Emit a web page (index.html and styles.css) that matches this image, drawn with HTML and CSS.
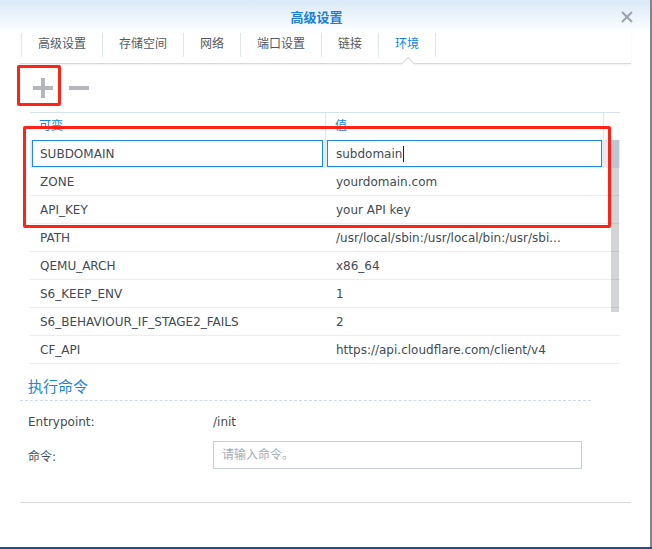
FILE: index.html
```html
<!DOCTYPE html>
<html lang="zh-CN">
<head>
  <meta charset="UTF-8" />
  <title>高级设置</title>
  <link rel="stylesheet" href="styles.css">
</head>
<body>

  <div class="window">
    <div class="titlebar">
      <h1 class="title">高级设置</h1>
      <svg class="close" width="12" height="12" viewBox="0 0 12 12">
        <path d="M1 1 L11 11 M11 1 L1 11" stroke="#9da2a7" stroke-width="2" fill="none" />
      </svg>
    </div>

    <div class="tabs">
      <div class="tab">高级设置</div>
      <div class="tab">存储空间</div>
      <div class="tab">网络</div>
      <div class="tab">端口设置</div>
      <div class="tab">链接</div>
      <div class="tab active">环境</div>
    </div>

    <div class="toolbar">
      <button class="tool-btn" title="新增">
        <svg width="20" height="20" viewBox="0 0 20 20">
          <rect x="0" y="8" width="20" height="4" fill="#b3b6ba" />
          <rect x="8" y="0" width="4" height="20" fill="#b3b6ba" />
        </svg>
      </button>
      <button class="tool-btn" title="删除">
        <svg width="20" height="20" viewBox="0 0 20 20">
          <rect x="0" y="8" width="20" height="4" fill="#b3b6ba" />
        </svg>
      </button>
    </div>

    <div class="env-grid">
      <div class="grid-head">
        <div class="cell">可变</div>
        <div class="cell">值</div>
        <div class="cell"></div>
      </div>
      <div class="grid-body">
        <div class="row editing">
          <div class="edit-box key-box">SUBDOMAIN</div>
          <div class="edit-box val-box">subdomain<span class="caret"></span></div>
        </div>
        <div class="row"><div class="key">ZONE</div><div class="val">yourdomain.com</div></div>
        <div class="row"><div class="key">API_KEY</div><div class="val">your API key</div></div>
        <div class="row"><div class="key">PATH</div><div class="val">/usr/local/sbin:/usr/local/bin:/usr/sbi...</div></div>
        <div class="row"><div class="key">QEMU_ARCH</div><div class="val">x86_64</div></div>
        <div class="row"><div class="key">S6_KEEP_ENV</div><div class="val">1</div></div>
        <div class="row"><div class="key">S6_BEHAVIOUR_IF_STAGE2_FAILS</div><div class="val">2</div></div>
        <div class="row"><div class="key">CF_API</div><div class="val">https://api.cloudflare.com/client/v4</div></div>
        <div class="scrollbar"></div>
      </div>
    </div>

    <div class="command">
      <div class="section-title">执行命令</div>
      <div class="field field-entry">
        <label>Entrypoint:</label>
        <span>/init</span>
      </div>
      <div class="field field-cmd">
        <label for="cmd">命令:</label>
        <input type="text" id="cmd" class="cmd-input" placeholder="请输入命令。" />
      </div>
    </div>

    <div class="footer-line"></div>

    <!-- red marks drawn over the add button and the new rows -->
    <div class="mark mark-add"></div>
    <div class="mark mark-rows"></div>
  </div>
  <div class="taskbar"></div>

</body>
</html>
```

FILE: styles.css
```css
* {
  box-sizing: border-box;
}

body {
  margin: 0;
  width: 652px;
  height: 549px;
  overflow: hidden;
  background-color: #80858a;
  font-family: "DejaVu Sans", "Noto Sans CJK SC", sans-serif;
  font-size: 12px;
  color: #414b55;
}

.window {
  position: relative;
  width: 650px;
  height: 547px;
  background-color: #fff;
  display: flex;
  flex-direction: column;
}

.taskbar {
  height: 2px;
  background-color: #1f4c9a;
}

/* title bar */
.titlebar {
  height: 33px;
  display: grid;
  grid-template-columns: 1fr auto 1fr;
  align-items: center;
  padding-right: 17px;
  background: linear-gradient(#d9e9f8, #ffffff);
}

.title {
  grid-column: 2;
  margin: 0;
  font-size: 13px;
  font-weight: bold;
  color: #1b80d8;
}

.close {
  justify-self: end;
}

/* tabs */
.tabs {
  display: flex;
  align-items: flex-start;
  height: 31px;
  margin: 0 19px 0 20px;
  padding-left: 1px;
  border-bottom: 1px solid #d6dade;
  box-shadow: 0 1px 2px rgba(0, 0, 0, 0.06);
}

.tab {
  height: 24px;
  padding: 1px 16px 0;
  line-height: 21px;
  border-left: 1px solid #dde5ec;
  color: #505a63;
}

.tab:last-child {
  border-right: 1px solid #dde5ec;
}

.tab.active {
  position: relative;
  color: #0e84e0;
}

.tab.active::after {
  content: "";
  position: absolute;
  left: 50%;
  top: 26px;
  width: 9px;
  height: 9px;
  margin-left: -4px;
  background-color: #fff;
  border-top: 1px solid #d6dade;
  border-left: 1px solid #d6dade;
  transform: rotate(45deg);
}

/* add / remove */
.toolbar {
  height: 48px;
  display: flex;
  align-items: center;
  gap: 16px;
  padding-left: 33px;
}

.tool-btn {
  display: block;
  width: 20px;
  height: 20px;
  padding: 0;
  border: none;
  background: none;
}

.tool-btn svg {
  display: block;
}

/* environment grid */
.env-grid {
  margin-left: 30px;
  width: 590px;
}

.grid-head {
  display: grid;
  grid-template-columns: 296px 278px 1fr;
  height: 28px;
  border-top: 1px solid #d6e3ef;
}

.grid-head .cell {
  line-height: 27px;
  padding-left: 9px;
  color: #1b84dc;
  border-right: 1px solid #dfe7ee;
}

.grid-head .cell:last-child {
  border-right: none;
}

.grid-body {
  position: relative;
  height: 224px;
}

.row {
  display: grid;
  grid-template-columns: 296px 1fr;
  align-items: center;
  height: 28px;
  border-bottom: 1px solid #e8edf2;
}

.row:last-of-type {
  border-bottom: none;
}

.row .key {
  padding-left: 10px;
  white-space: nowrap;
}

.row .val {
  padding-left: 10px;
  white-space: nowrap;
}

.row.editing {
  align-items: start;
  background-color: #e1ecf6;
}

.edit-box {
  height: 27px;
  padding-top: 1px;
  line-height: 25px;
  border: 1px solid #1c8ae6;
  background-color: #fff;
}

.key-box {
  width: 291px;
  margin-left: 2px;
  padding-left: 7px;
}

.val-box {
  width: 275px;
  margin-left: 1px;
  padding-left: 8px;
}

.caret {
  display: inline-block;
  width: 1px;
  height: 16px;
  margin-left: 1px;
  vertical-align: -4px;
  background-color: #222;
}

.scrollbar {
  position: absolute;
  top: 0;
  right: 1px;
  width: 8px;
  height: 172px;
  background-color: rgba(105, 112, 122, 0.3);
}

/* command section */
.command {
  margin: 0 59px 0 20px;
}

.section-title {
  padding: 13px 0 3px 8px;
  line-height: 20px;
  font-size: 15px;
  color: #1b84dc;
  border-bottom: 1px dashed #cddae6;
}

.field {
  display: flex;
  align-items: center;
  padding-left: 8px;
}

.field label {
  width: 185px;
}

.field-entry {
  height: 24px;
  margin-top: 9px;
}

.field-cmd {
  margin-top: 7px;
}

.cmd-input {
  width: 369px;
  height: 28px;
  padding: 0 8px;
  border: 1px solid #c7d0da;
  font: inherit;
  color: #414b55;
  outline: none;
}

.cmd-input::placeholder {
  color: #a4acb4;
}

.footer-line {
  height: 1px;
  margin: 33px 19px 0 20px;
  background-color: #d9d9d9;
  box-shadow: 0 -2px 3px rgba(0, 0, 0, 0.04);
}

/* red highlight marks */
.mark {
  position: absolute;
  border: 3px solid #fe2316;
  border-radius: 2px;
  pointer-events: none;
}

.mark-add {
  left: 17px;
  top: 65px;
  width: 44px;
  height: 41px;
}

.mark-rows {
  left: 23px;
  top: 126px;
  width: 588px;
  height: 102px;
}
```
